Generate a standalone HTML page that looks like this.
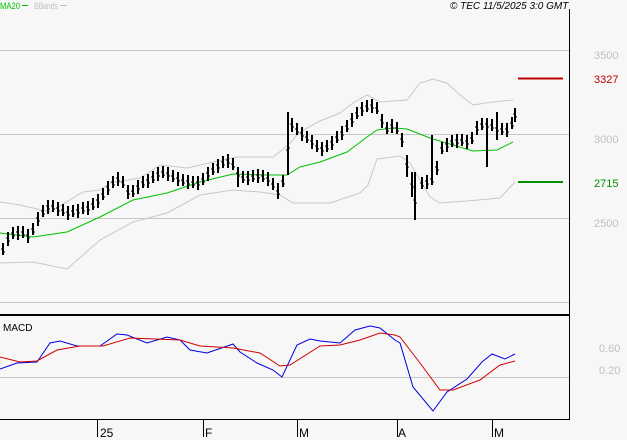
<!DOCTYPE html>
<html><head><meta charset="utf-8">
<style>
html,body{margin:0;padding:0;background:#f7f7f7;}
body{width:627px;height:440px;overflow:hidden;font-family:"Liberation Sans",sans-serif;}
svg{display:block}
text{font-family:"Liberation Sans",sans-serif;}
</style></head><body>
<svg width="627" height="440" viewBox="0 0 627 440" xmlns="http://www.w3.org/2000/svg" shape-rendering="crispEdges">
<rect width="627" height="440" fill="#f7f7f7"/>
<g stroke="#c8c8c8" stroke-width="1">
<line x1="0" y1="50.5" x2="569" y2="50.5"/>
<line x1="0" y1="134.5" x2="569" y2="134.5"/>
<line x1="0" y1="218.5" x2="569" y2="218.5"/>
<line x1="0" y1="302.5" x2="569" y2="302.5"/>
<line x1="0" y1="377.5" x2="569" y2="377.5"/>
</g>
<line x1="569.5" y1="9" x2="569.5" y2="420" stroke="#000"/>
<line x1="0" y1="315" x2="570" y2="315" stroke="#000" stroke-width="2"/>
<line x1="0" y1="419.5" x2="570" y2="419.5" stroke="#000"/>
<g stroke="#000">
<line x1="97.5" y1="420" x2="97.5" y2="437"/>
<line x1="203.5" y1="420" x2="203.5" y2="437"/>
<line x1="297.5" y1="420" x2="297.5" y2="437"/>
<line x1="397.5" y1="420" x2="397.5" y2="437"/>
<line x1="492.5" y1="420" x2="492.5" y2="437"/>
</g>
<g font-size="12" fill="#000">
<text x="100" y="437">25</text>
<text x="205" y="437">F</text>
<text x="299" y="437">M</text>
<text x="398" y="437">A</text>
<text x="494" y="437">M</text>
</g>
<text x="0" y="9" font-size="9" fill="#00c000" textLength="20" lengthAdjust="spacingAndGlyphs">MA20</text>
<line x1="22" y1="5.5" x2="28" y2="5.5" stroke="#00c000"/>
<text x="34" y="9" font-size="9" fill="#c0c0c0" textLength="24" lengthAdjust="spacingAndGlyphs">BBands</text>
<line x1="60" y1="5.5" x2="67" y2="5.5" stroke="#c0c0c0"/>
<text x="450" y="9" font-size="10" font-style="italic" fill="#000">© TEC 11/5/2025 3:0 GMT</text>
<g font-size="11" fill="#c0c0c0">
<text x="594" y="59">3500</text>
<text x="594" y="143">3000</text>
<text x="594" y="227">2500</text>
<text x="599" y="352">0.60</text>
<text x="599" y="374">0.20</text>
</g>
<line x1="518" y1="78.5" x2="563" y2="78.5" stroke="#c00000" stroke-width="2"/>
<text x="594" y="83" font-size="11" fill="#c00000">3327</text>
<line x1="518" y1="182" x2="563" y2="182" stroke="#009000" stroke-width="2"/>
<text x="594" y="187" font-size="11" fill="#009000">2715</text>
<text x="3" y="331" font-size="10" fill="#000">MACD</text>
<g fill="none" shape-rendering="auto">
<polyline stroke="#c8c8c8" points="0,202 20,205 50,212 83,192 100,190 110,183 140,178 160,165 187,168 213,162 237,157 273,157 282,150 290,143 300,132 320,121 340,113 353,103 367,95 380,102 407,100 420,83 433,79 447,83 460,95 473,105 493,102 513,100"/>
<polyline stroke="#c8c8c8" points="0,263 33,262 67,269 100,240 133,222 167,213 200,195 233,190 260,192 280,195 293,203 330,203 360,193 368,185 377,159 400,156 410,163 430,197 440,203 467,201 500,198 515,182"/>
<polyline stroke="#00c000" points="0,233 33,237 67,232 100,217 133,200 167,193 200,182 233,174 267,175 287,175 300,167 320,162 347,152 367,137 377,130 393,128 407,129 430,138 453,145 473,151 497,150 513,142"/>
<polyline stroke="#0000e0" points="0,369 17,363 37,362 50,343 60,341 77,346 100,346 117,334 127,335 147,343 167,337 180,340 190,350 207,353 233,344 240,352 257,363 273,370 282,377 297,345 310,339 320,341 340,343 355,330 370,326 380,328 395,340 400,343 413,387 433,411 447,392 467,379 482,362 492,354 505,359 515,354"/>
<polyline stroke="#d00000" points="0,357 20,362 37,361 57,350 80,346 103,346 130,338 180,340 200,346 233,348 260,353 280,366 290,365 320,346 340,345 360,340 380,333 395,335 400,337 420,363 440,390 453,390 480,380 500,365 515,361"/>
</g>
<path stroke="#000" stroke-width="2" fill="none" d="
M3 243v12 M8 232v14 M13 227v12 M18 226v14 M23 226v12 M28 229v14 M33 223v12 M38 212v14 M43 205v12 M48 200v14
M53 200v12 M58 202v14 M63 204v12 M68 206v14 M73 205v12 M78 204v14 M83 202v12 M88 201v14 M93 198v12 M98 194v14
M103 188v12 M108 181v14 M113 176v12 M118 172v14 M123 176v12 M128 185v14 M133 185v12 M138 180v14 M143 176v12 M148 174v14
M153 171v12 M158 167v14 M163 166v12 M168 167v14 M173 170v12 M178 172v14 M183 174v12 M188 175v14 M193 176v12 M198 176v14
M203 173v12 M208 167v14 M213 163v12 M218 159v14 M223 156v12 M228 154v14 M233 158v12 M238 167v20 M243 171v12 M248 171v14
M253 170v12 M258 169v14 M263 170v12 M268 172v14 M273 178v12 M278 183v16 M283 175v12 M288 112v63 M292 118v14 M297 123v12
M302 127v14 M307 131v12 M312 135v14 M317 140v12 M322 142v14 M327 140v12 M332 136v14 M337 131v12 M342 126v14 M347 120v12
M352 113v14 M357 107v12 M362 102v14 M367 100v12 M372 99v14 M377 102v12 M382 114v14 M387 122v12 M392 119v14 M397 122v12
M402 133v14 M407 155v22 M412 172v25 M415 172v48 M422 177v12 M427 175v14 M432 135v50 M437 161v14 M442 142v12 M447 138v14
M452 135v12 M457 134v14 M462 134v12 M467 135v14 M472 132v12 M477 121v14 M482 118v12 M487 118v49 M492 119v12 M497 112v28
M502 123v12 M507 123v14 M512 117v12 M515 108v14"/>
<path stroke="#000" stroke-width="1" fill="none" d="
M1 249h2M3 252h2 M6 238h2M8 241h2 M11 233h2M13 236h2 M16 232h2M18 235h2 M21 232h2M23 235h2 M26 235h2M28 238h2 M31 229h2M33 232h2 M36 218h2M38 221h2 M41 211h2M43 214h2 M46 206h2M48 209h2
M51 206h2M53 209h2 M56 208h2M58 211h2 M61 210h2M63 213h2 M66 212h2M68 215h2 M71 211h2M73 214h2 M76 210h2M78 213h2 M81 208h2M83 211h2 M86 207h2M88 210h2 M91 204h2M93 207h2 M96 200h2M98 203h2
M101 194h2M103 197h2 M106 187h2M108 190h2 M111 182h2M113 185h2 M116 178h2M118 181h2 M121 182h2M123 185h2 M126 191h2M128 194h2 M131 191h2M133 194h2 M136 186h2M138 189h2 M141 182h2M143 185h2 M146 180h2M148 183h2
M151 177h2M153 180h2 M156 173h2M158 176h2 M161 172h2M163 175h2 M166 173h2M168 176h2 M171 176h2M173 179h2 M176 178h2M178 181h2 M181 180h2M183 183h2 M186 181h2M188 184h2 M191 182h2M193 185h2 M196 182h2M198 185h2
M201 179h2M203 182h2 M206 173h2M208 176h2 M211 169h2M213 172h2 M216 165h2M218 168h2 M221 162h2M223 165h2 M226 160h2M228 163h2 M231 164h2M233 167h2 M236 173h2M238 176h2 M241 177h2M243 180h2 M246 177h2M248 180h2
M251 176h2M253 179h2 M256 175h2M258 178h2 M261 176h2M263 179h2 M266 178h2M268 181h2 M271 184h2M273 187h2 M276 191h2M278 194h2 M281 181h2M283 184h2 M286 150h2M288 148h2 M290 124h2M292 127h2 M295 129h2M297 132h2
M300 133h2M302 136h2 M305 137h2M307 140h2 M310 141h2M312 144h2 M315 146h2M317 149h2 M320 148h2M322 151h2 M325 146h2M327 149h2 M330 142h2M332 145h2 M335 137h2M337 140h2 M340 132h2M342 135h2 M345 126h2M347 129h2
M350 119h2M352 122h2 M355 113h2M357 116h2 M360 108h2M362 111h2 M365 106h2M367 109h2 M370 105h2M372 108h2 M375 108h2M377 111h2 M380 120h2M382 123h2 M385 128h2M387 131h2 M390 125h2M392 128h2 M395 128h2M397 131h2
M400 139h2M402 142h2 M405 164h2M407 167h2 M410 184h2M412 187h2 M413 200h2M415 203h2 M420 183h2M422 186h2 M425 181h2M427 184h2 M430 179h2M432 182h2 M435 167h2M437 170h2 M440 148h2M442 151h2 M445 144h2M447 147h2
M450 141h2M452 144h2 M455 140h2M457 143h2 M460 140h2M462 143h2 M465 141h2M467 144h2 M470 138h2M472 141h2 M475 127h2M477 130h2 M480 124h2M482 127h2 M485 124h2M487 127h2 M490 125h2M492 128h2 M495 128h2M497 131h2
M500 129h2M502 132h2 M505 129h2M507 132h2 M510 123h2M512 126h2 M513 114h2M515 117h2"/>
</svg>
</body></html>
